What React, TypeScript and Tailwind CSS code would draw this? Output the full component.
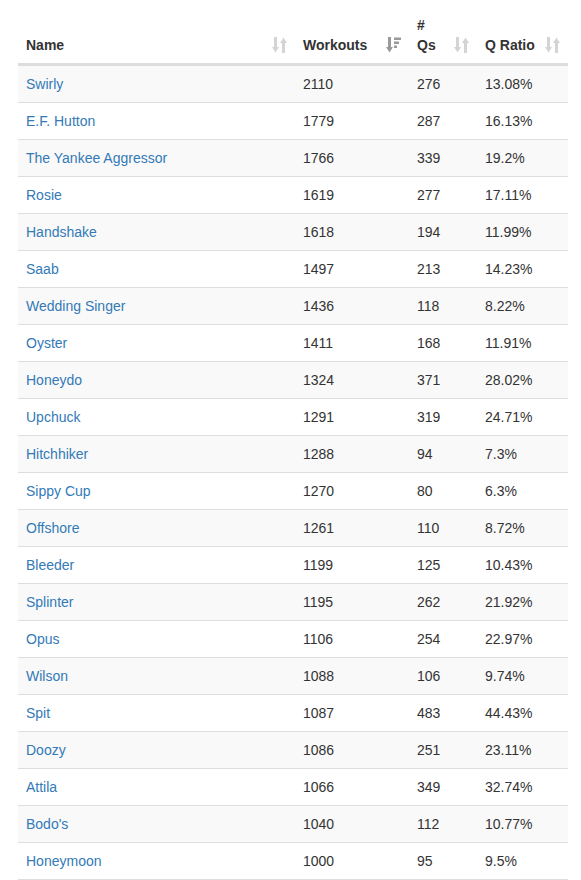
import React from 'react';

type Row = { name: string; workouts: number; qs: number; ratio: string };

const rows: Row[] = [
  { name: 'Swirly', workouts: 2110, qs: 276, ratio: '13.08%' },
  { name: 'E.F. Hutton', workouts: 1779, qs: 287, ratio: '16.13%' },
  { name: 'The Yankee Aggressor', workouts: 1766, qs: 339, ratio: '19.2%' },
  { name: 'Rosie', workouts: 1619, qs: 277, ratio: '17.11%' },
  { name: 'Handshake', workouts: 1618, qs: 194, ratio: '11.99%' },
  { name: 'Saab', workouts: 1497, qs: 213, ratio: '14.23%' },
  { name: 'Wedding Singer', workouts: 1436, qs: 118, ratio: '8.22%' },
  { name: 'Oyster', workouts: 1411, qs: 168, ratio: '11.91%' },
  { name: 'Honeydo', workouts: 1324, qs: 371, ratio: '28.02%' },
  { name: 'Upchuck', workouts: 1291, qs: 319, ratio: '24.71%' },
  { name: 'Hitchhiker', workouts: 1288, qs: 94, ratio: '7.3%' },
  { name: 'Sippy Cup', workouts: 1270, qs: 80, ratio: '6.3%' },
  { name: 'Offshore', workouts: 1261, qs: 110, ratio: '8.72%' },
  { name: 'Bleeder', workouts: 1199, qs: 125, ratio: '10.43%' },
  { name: 'Splinter', workouts: 1195, qs: 262, ratio: '21.92%' },
  { name: 'Opus', workouts: 1106, qs: 254, ratio: '22.97%' },
  { name: 'Wilson', workouts: 1088, qs: 106, ratio: '9.74%' },
  { name: 'Spit', workouts: 1087, qs: 483, ratio: '44.43%' },
  { name: 'Doozy', workouts: 1086, qs: 251, ratio: '23.11%' },
  { name: 'Attila', workouts: 1066, qs: 349, ratio: '32.74%' },
  { name: "Bodo's", workouts: 1040, qs: 112, ratio: '10.77%' },
  { name: 'Honeymoon', workouts: 1000, qs: 95, ratio: '9.5%' },
];

// unsorted column: down arrow + up arrow
const SortBoth = () => (
  <svg width="15" height="16" viewBox="0 0 15 16" className="absolute right-[8px] bottom-[10px] text-[#d4d4d4]" fill="currentColor">
    <rect x="2" y="0" width="3" height="11" />
    <path d="M0 10 L7 10 L3.5 15.5 Z" />
    <rect x="10" y="5" width="3" height="11" />
    <path d="M8 6 L15 6 L11.5 0.5 Z" />
  </svg>
);

// sorted descending: down arrow + shrinking bars
const SortDesc = () => (
  <svg width="15" height="16" viewBox="0 0 15 16" className="absolute right-[8px] bottom-[10px] text-[#999]" fill="currentColor">
    <rect x="2" y="0" width="3" height="11" />
    <path d="M0 10 L7 10 L3.5 15.5 Z" />
    <rect x="8" y="0.5" width="7" height="2.5" />
    <rect x="8" y="4.5" width="5" height="2.5" />
    <rect x="8" y="8.5" width="3" height="2.5" />
  </svg>
);

export default function App() {
  const th = 'relative align-bottom text-left font-bold pl-2 pr-[30px] py-2 leading-5 border-b-2 border-[#ddd]';
  const td = 'px-2 py-2 leading-5 border-t border-[#ddd]';
  return (
    <div className="bg-white min-h-screen pt-[7px] pl-[18px]" style={{ fontFamily: '"Liberation Sans", Arial, sans-serif' }}>
      <table className="w-[550px] table-fixed border-separate border-spacing-0 text-[14px] text-[#333] border-b border-[#ddd]">
        <colgroup>
          <col className="w-[277px]" />
          <col className="w-[114px]" />
          <col className="w-[68px]" />
          <col className="w-[91px]" />
        </colgroup>
        <thead>
          <tr>
            <th className={th}>
              Name
              <SortBoth />
            </th>
            <th className={th}>
              Workouts
              <SortDesc />
            </th>
            <th className={th}>
              #<br />Qs
              <SortBoth />
            </th>
            <th className={th}>
              Q Ratio
              <SortBoth />
            </th>
          </tr>
        </thead>
        <tbody>
          {rows.map((r, i) => (
            <tr key={r.name} className={i % 2 === 0 ? 'bg-[#f9f9f9]' : 'bg-white'}>
              <td className={td}>
                <a href="#" className="text-[#337ab7]">{r.name}</a>
              </td>
              <td className={td}>{r.workouts}</td>
              <td className={td}>{r.qs}</td>
              <td className={td}>{r.ratio}</td>
            </tr>
          ))}
        </tbody>
      </table>
    </div>
  );
}
